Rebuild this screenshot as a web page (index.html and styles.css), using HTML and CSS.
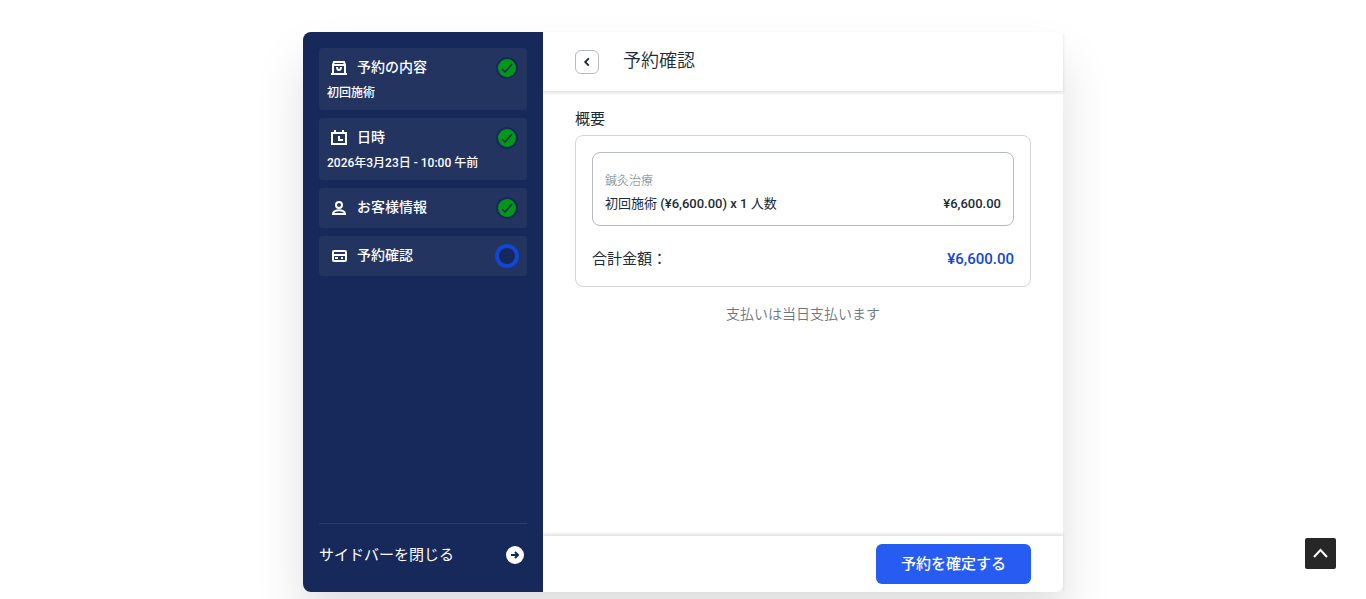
FILE: index.html
```html
<!DOCTYPE html>
<html lang="ja">
  <head>
    <meta charset="UTF-8" />
    <meta name="viewport" content="width=device-width, initial-scale=1.0" />
    <title>予約確認</title>
    <link rel="stylesheet" href="styles.css" />
  </head>
  <body>
    <div class="booking">
      <aside class="sidebar">
        <ul class="steps">
          <li class="step">
            <div class="step-head">
              <svg class="step-icon" viewBox="0 0 20 20">
                <path d="M5 4h10l1 3v9H4V7zM4 7h12M2 16h16" />
                <path d="M8 9c0 4 4 4 4 0" />
              </svg>
              <span class="step-name">予約の内容</span>
              <span class="status done">
                <svg viewBox="0 0 18 18"><path d="M4 10l3 3 7-8" /></svg>
              </span>
            </div>
            <p class="step-info">初回施術</p>
          </li>
          <li class="step">
            <div class="step-head">
              <svg class="step-icon" viewBox="0 0 20 20">
                <path d="M3 5h14v11H3zM6 2v4M14 2v4M10 8v4h4" />
              </svg>
              <span class="step-name">日時</span>
              <span class="status done">
                <svg viewBox="0 0 18 18"><path d="M4 10l3 3 7-8" /></svg>
              </span>
            </div>
            <p class="step-info">2026年3月23日 - 10:00 午前</p>
          </li>
          <li class="step">
            <div class="step-head">
              <svg class="step-icon" viewBox="0 0 20 20">
                <circle cx="10" cy="7" r="3" />
                <path d="M4 16c0-5 12-5 12 0z" />
              </svg>
              <span class="step-name">お客様情報</span>
              <span class="status done">
                <svg viewBox="0 0 18 18"><path d="M4 10l3 3 7-8" /></svg>
              </span>
            </div>
          </li>
          <li class="step">
            <div class="step-head">
              <svg class="step-icon" viewBox="0 0 20 20">
                <rect x="4" y="5" width="13" height="10" rx="1" />
                <path d="M4 9h13M6 12h3M12 12h2" />
              </svg>
              <span class="step-name">予約確認</span>
              <span class="status current"></span>
            </div>
          </li>
        </ul>
        <button class="collapse" type="button">
          <span>サイドバーを閉じる</span>
          <svg viewBox="0 0 18 18">
            <circle cx="9" cy="9" r="9" />
            <path d="M5 9h7M9 6l3 3-3 3" />
          </svg>
        </button>
      </aside>

      <main class="main">
        <header class="main-header">
          <button class="back" type="button" aria-label="戻る">
            <svg viewBox="0 0 24 24"><path d="M14 8l-4 4 4 4" /></svg>
          </button>
          <h1>予約確認</h1>
        </header>

        <section class="content">
          <h2>概要</h2>
          <div class="summary">
            <div class="service">
              <p class="service-type">鍼灸治療</p>
              <div class="service-row">
                <span>初回施術 <strong>(¥6,600.00) x 1</strong> 人数</span>
                <strong>¥6,600.00</strong>
              </div>
            </div>
            <div class="total">
              <span>合計金額：</span>
              <span class="total-price">¥6,600.00</span>
            </div>
          </div>
          <p class="payment">支払いは当日支払います</p>
        </section>

        <footer class="main-footer">
          <button class="confirm" type="button">予約を確定する</button>
        </footer>
      </main>
    </div>

    <a class="to-top" href="#" aria-label="トップへ">
      <svg viewBox="0 0 31 31"><path d="M9 19l6.500-7 6.500 7" /></svg>
    </a>
  </body>
</html>
```
FILE: styles.css
```css
* {
  box-sizing: border-box;
}
body {
  margin: 0;
  padding: 32px 16px 7px;
  min-height: 100vh;
  display: flex;
  justify-content: center;
  background-color: #fff;
  color: #1a2c37;
  font-family: Roboto, "Noto Sans CJK JP", sans-serif;
  font-size: 15px;
}
h1,
h2,
p,
ul {
  margin: 0;
  padding: 0;
}
button {
  font-family: inherit;
  cursor: pointer;
}
svg {
  fill: none;
  stroke: currentColor;
}
.booking {
  width: 100%;
  max-width: 760px;
  display: flex;
  border-radius: 8px;
  box-shadow: 0 30px 50px rgba(0, 0, 0, 0.13);
}

/* sidebar */
.sidebar {
  width: 240px;
  flex-shrink: 0;
  padding: 16px;
  display: flex;
  flex-direction: column;
  justify-content: space-between;
  background-color: #17295a;
  color: #fff;
  border-radius: 8px 0 0 8px;
}
.steps {
  list-style: none;
  display: flex;
  flex-direction: column;
  gap: 8px;
}
.step {
  padding: 8px;
  border-radius: 4px;
  background-color: #233461;
}
.step-head {
  display: flex;
  align-items: center;
  height: 24px;
}
.step-icon {
  width: 20px;
  height: 20px;
  margin-left: 2px;
  stroke-width: 2;
}
.step-name {
  flex: 1;
  margin-left: 8px;
  padding-bottom: 2px;
  font-size: 14px;
  font-weight: 500;
  line-height: 22px;
}
.step-info {
  font-size: 12px;
  font-weight: 500;
  line-height: 18px;
  margin-top: 4px;
}
.status {
  width: 24px;
  height: 24px;
  border-radius: 50%;
}
.done {
  padding: 3px;
  color: #17295a;
}
.done svg {
  display: block;
  width: 18px;
  height: 18px;
  border-radius: 50%;
  background-color: #019719;
  box-shadow: 0 0 0 2px #17295a;
  stroke-width: 1.5;
}
.current {
  border: 4px solid #1246d6;
  background-color: #17295a;
}
.collapse {
  display: flex;
  align-items: center;
  justify-content: space-between;
  padding: 20px 3px 10px 0;
  border: none;
  border-top: 1px solid #2e3e6b;
  background: none;
  color: #fff;
  font-size: 15px;
  line-height: 22px;
}
.collapse svg {
  width: 18px;
  height: 18px;
  stroke: #17295a;
  stroke-width: 2;
}
.collapse circle {
  fill: #fff;
  stroke: none;
}

/* main */
.main {
  flex: 1;
  display: flex;
  flex-direction: column;
  background-color: #fff;
  border-radius: 0 8px 8px 0;
}
.main-header {
  display: flex;
  align-items: center;
  gap: 24px;
  padding: 16px 32px;
  box-shadow: 0 2px 3px rgba(26, 44, 55, 0.15);
}
.main-header h1 {
  padding-bottom: 2px;
  font-size: 18px;
  font-weight: 350;
  line-height: 25px;
}
.back {
  width: 24px;
  height: 24px;
  padding: 0;
  border: 1px solid #b4babe;
  border-radius: 6px;
  background-color: #fff;
  color: #1a2c37;
}
.back svg {
  display: block;
  stroke-width: 2;
}
.content {
  flex: 1;
  padding: 16px 32px;
}
.content h2 {
  font-size: 15px;
  font-weight: 400;
  line-height: 24px;
  margin-bottom: 4px;
}
.summary {
  padding: 16px;
  border: 1px solid #d1d5d7;
  border-radius: 8px;
}
.service {
  padding: 16px 12px 10px;
  border: 1px solid #b4babe;
  border-radius: 8px;
}
.service-type {
  font-size: 12px;
  font-weight: 300;
  line-height: 24px;
  color: #6c777e;
}
.service-row {
  display: flex;
  justify-content: space-between;
  font-size: 13px;
  line-height: 22px;
}
.service-row strong {
  font-weight: 500;
}
.total {
  display: flex;
  justify-content: space-between;
  padding-top: 22px;
  line-height: 22px;
}
.total-price {
  font-weight: 500;
  color: #1246d6;
}
.payment {
  margin-top: 16px;
  font-size: 14px;
  font-weight: 350;
  line-height: 22px;
  text-align: center;
  color: #6c777e;
}
.main-footer {
  display: flex;
  justify-content: flex-end;
  padding: 8px 32px;
  box-shadow: 0 -2px 3px rgba(26, 44, 55, 0.15);
}
.confirm {
  height: 40px;
  padding: 0 25px 4px;
  border: none;
  border-radius: 6px;
  background-color: #265cf2;
  color: #fff;
  font-size: 15px;
  font-weight: 500;
}

.to-top {
  position: fixed;
  right: 30px;
  bottom: 30px;
  width: 31px;
  height: 31px;
  border-radius: 2px;
  background-color: #272727;
  color: #fff;
}
.to-top svg {
  display: block;
  stroke-width: 2;
}
```
